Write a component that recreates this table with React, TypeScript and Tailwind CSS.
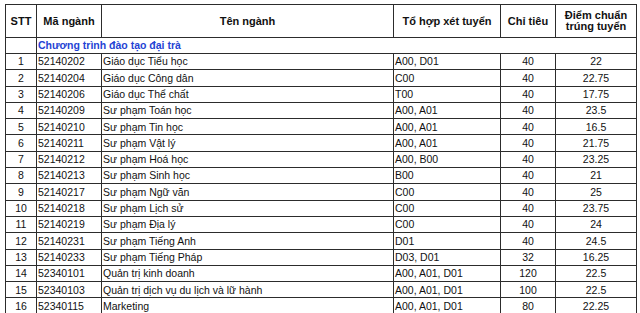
const rows: [string, string, string, string, string, string][] = [
  ["1", "52140202", "Giáo dục Tiểu học", "A00, D01", "40", "22"],
  ["2", "52140204", "Giáo dục Công dân", "C00", "40", "22.75"],
  ["3", "52140206", "Giáo dục Thể chất", "T00", "40", "17.75"],
  ["4", "52140209", "Sư phạm Toán học", "A00, A01", "40", "23.5"],
  ["5", "52140210", "Sư phạm Tin học", "A00, A01", "40", "16.5"],
  ["6", "52140211", "Sư phạm Vật lý", "A00, A01", "40", "21.75"],
  ["7", "52140212", "Sư phạm Hoá học", "A00, B00", "40", "23.25"],
  ["8", "52140213", "Sư phạm Sinh học", "B00", "40", "21"],
  ["9", "52140217", "Sư phạm Ngữ văn", "C00", "40", "25"],
  ["10", "52140218", "Sư phạm Lịch sử", "C00", "40", "23.75"],
  ["11", "52140219", "Sư phạm Địa lý", "C00", "40", "24"],
  ["12", "52140231", "Sư phạm Tiếng Anh", "D01", "40", "24.5"],
  ["13", "52140233", "Sư phạm Tiếng Pháp", "D03, D01", "32", "16.25"],
  ["14", "52340101", "Quản trị kinh doanh", "A00, A01, D01", "120", "22.5"],
  ["15", "52340103", "Quản trị dịch vụ du lịch và lữ hành", "A00, A01, D01", "100", "22.5"],
  ["16", "52340115", "Marketing", "A00, A01, D01", "80", "22.25"],
];

const cell = "border border-[#2c2c2c] p-0 leading-none";

export default function App() {
  return (
    <div className="w-[640px] h-[313px] overflow-hidden bg-white pt-[4px] pl-[5px] font-['Liberation_Sans',Arial,sans-serif] text-[#111]">
      <table className="w-[631px] table-fixed border-collapse text-[10.5px]">
        <colgroup>
          <col className="w-[31px]" />
          <col className="w-[65px]" />
          <col className="w-[292px]" />
          <col className="w-[107px]" />
          <col className="w-[55px]" />
          <col className="w-[81px]" />
        </colgroup>
        <thead>
          <tr className="h-[33px] font-bold text-[11px]">
            <th className={`${cell} text-center`}>STT</th>
            <th className={`${cell} text-center`}>Mã ngành</th>
            <th className={`${cell} text-center`}>Tên ngành</th>
            <th className={`${cell} text-center`}>Tổ hợp xét tuyển</th>
            <th className={`${cell} text-center`}>Chỉ tiêu</th>
            <th className={`${cell} text-center leading-[13px]`}>
              Điểm chuẩn
              <br />
              trúng tuyển
            </th>
          </tr>
        </thead>
        <tbody>
          <tr className="h-[16px]">
            <td className={cell}></td>
            <td
              colSpan={5}
              className={`${cell} pl-[1px] font-bold text-[#1f44d4]`}
            >
              Chương trình đào tạo đại trà
            </td>
          </tr>
          {rows.map((r) => (
            <tr key={r[0]} className="h-[16.3px]">
              <td className={`${cell} text-center`}>{r[0]}</td>
              <td className={`${cell} pl-[1px]`}>{r[1]}</td>
              <td className={`${cell} pl-[1px]`}>{r[2]}</td>
              <td className={`${cell} pl-[1px]`}>{r[3]}</td>
              <td className={`${cell} text-center`}>{r[4]}</td>
              <td className={`${cell} text-center`}>{r[5]}</td>
            </tr>
          ))}
        </tbody>
      </table>
    </div>
  );
}
